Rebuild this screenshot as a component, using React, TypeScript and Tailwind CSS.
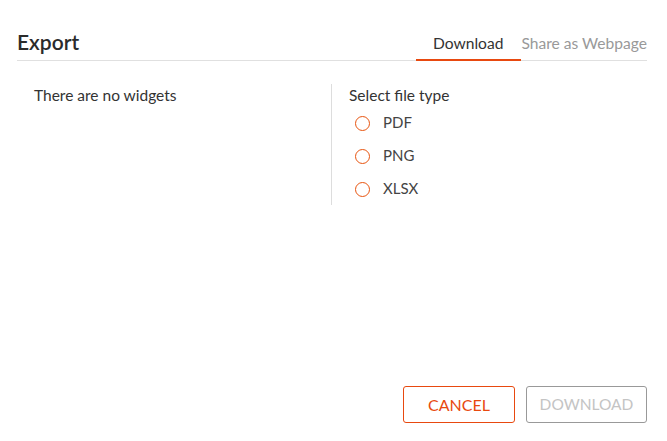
import { useState } from 'react'

const fileTypes = ['PDF', 'PNG', 'XLSX']

export default function App() {
  const [selected, setSelected] = useState<string | null>(null)

  return (
    <div className="flex h-[441px] w-[667px] flex-col bg-white pl-[17px] pr-[20px] font-['Lato','Liberation_Sans',sans-serif] text-[#333]">
      {/* Header */}
      <header className="flex h-[61px] items-end justify-between border-b border-[#e0e0e0]">
        <h1 className="mb-[6px] text-[21px] font-semibold leading-[24px] text-[#2b2b2b]">Export</h1>
        <div className="flex">
          <button className="-mb-px border-b-2 border-[#e8490f] pl-[17px] pr-[18px] pb-[6px] text-[15.6px] leading-[20px] text-[#333]">
            Download
          </button>
          <button className="-mb-px border-b-2 border-transparent pb-[6px] text-[15.6px] leading-[20px] text-[#999]">
            Share as Webpage
          </button>
        </div>
      </header>

      {/* Body */}
      <div className="mt-[23px] flex">
        <div className="w-[314px] pl-[17px] pt-[2px] text-[15.5px] leading-[18px]">There are no widgets</div>
        <div className="h-[121px] border-l border-[#ddd] pl-[17px] pt-[2px]">
          <div className="text-[15.5px] leading-[18px]">Select file type</div>
          <div className="mt-[1px] flex flex-col">
            {fileTypes.map((t) => (
              <label key={t} className="flex h-[33px] cursor-pointer items-center">
                <span
                  onClick={() => setSelected(t)}
                  className="ml-[6px] mt-[4px] flex h-[15px] w-[15px] items-center justify-center rounded-full border-[1.5px] border-[#e8540f]"
                >
                  {selected === t && <span className="h-[7px] w-[7px] rounded-full bg-[#e8540f]" />}
                </span>
                <span className="ml-[13px] mt-[1px] text-[15px] leading-[18px] text-[#444]">{t}</span>
              </label>
            ))}
          </div>
        </div>
      </div>

      {/* Footer */}
      <div className="mt-auto mb-[18px] flex justify-end gap-[11px]">
        <button className="h-[37px] w-[112px] rounded-[3px] border border-[#e8490f] text-[16px] text-[#e8490f]">
          CANCEL
        </button>
        <button className="h-[37px] w-[121px] rounded-[3px] border border-[#999] text-[15.5px] text-[#c4c4c4]">
          DOWNLOAD
        </button>
      </div>
    </div>
  )
}
